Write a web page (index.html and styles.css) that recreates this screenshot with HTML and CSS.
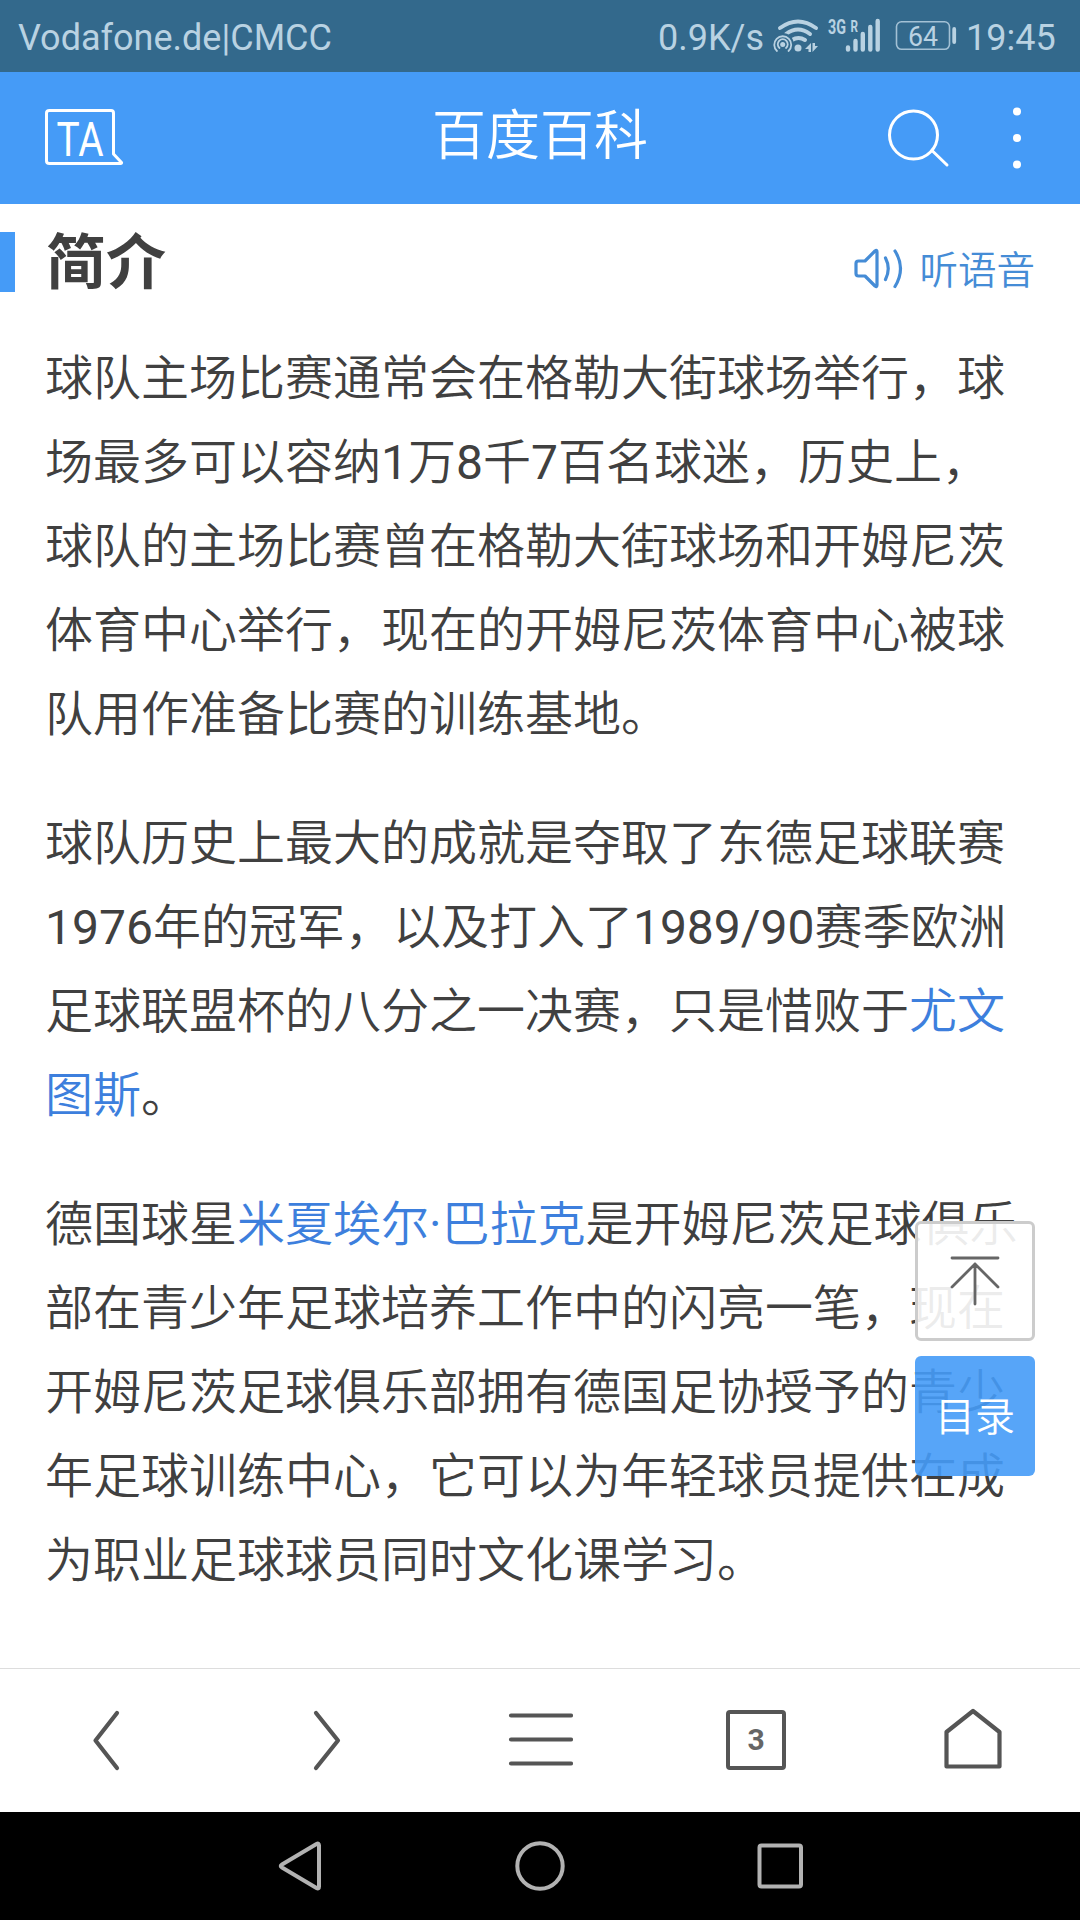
FILE: index.html
```html
<!DOCTYPE html>
<html lang="zh-CN">
<head>
    <meta charset="UTF-8">
    <meta name="viewport" content="width=device-width, initial-scale=1.0">
    <title>百度百科</title>
    <link rel="stylesheet" href="styles.css">
</head>
<body>
    <div class="status-bar">
        <span class="carrier">Vodafone.de|CMCC</span>
        <span class="speed">0.9K/s</span>
        <svg class="status-icons" width="190" height="72" viewBox="0 0 190 72">
            <!-- wifi -->
            <g fill="none" stroke="#b9d2e2" stroke-width="4" stroke-linecap="round">
                <path d="M10 28Q28 15 46 28"/>
                <path d="M16 34Q28 25 40 34"/>
                <path d="M22 40Q28.500 36 35 40"/>
            </g>
            <circle cx="28" cy="48" r="3.500" fill="#b9d2e2"/>
            <circle cx="12.700" cy="44" r="11" fill="#33698c"/>
            <g fill="none" stroke="#b9d2e2" stroke-width="1.800" stroke-linecap="round">
                <path d="M7 51A8.500 8.500 0 1 1 18.500 51"/>
                <path d="M9.500 48A5 5 0 1 1 16 48"/>
            </g>
            <circle cx="12.700" cy="44.500" r="2.500" fill="#b9d2e2"/>
            <path d="M35 49L41 43V52H38.500V49ZM42.500 43H45V46H48L42.500 52Z" fill="#b9d2e2"/>
            <!-- signal -->
            <text class="network" x="58" y="34" textLength="18" lengthAdjust="spacingAndGlyphs">3G</text>
            <text class="roaming" x="80.500" y="31.500" textLength="7.500" lengthAdjust="spacingAndGlyphs">R</text>
            <g stroke="#b9d2e2" stroke-width="4.400" stroke-linecap="round">
                <path d="M78 47.500V49.500M85.500 41V49.500M92.800 34V49.500M100.300 27V49.500M107.700 21V49.500"/>
            </g>
            <!-- battery -->
            <rect x="126.500" y="21.800" width="53" height="27.500" rx="5" fill="none" stroke="#a3c1d5" stroke-width="1.600"/>
            <rect x="182.300" y="27" width="3.800" height="17" rx="1.900" fill="#b9d2e2"/>
            <text class="battery" x="138" y="45.500" textLength="30" lengthAdjust="spacingAndGlyphs">64</text>
        </svg>
        <span class="clock">19:45</span>
    </div>

    <header class="header">
        <svg width="80" height="60" viewBox="0 0 80 60">
            <path d="M4.500 2.500H66Q68.500 2.500 68.500 5V46L76.500 54.500Q77 55.500 75.500 55.500H4.500Q1.500 55.500 1.500 53V5Q1.500 2.500 4.500 2.500Z" fill="none" stroke="#fff" stroke-width="3" stroke-linejoin="round"/>
            <text class="ta" x="11.500" y="47.500" textLength="47" lengthAdjust="spacingAndGlyphs">TA</text>
        </svg>
        <h1>百度百科</h1>
        <div class="header-actions">
            <svg width="62" height="60" viewBox="0 0 62 60">
                <g fill="none" stroke="#fff" stroke-width="3" stroke-linecap="round">
                    <circle cx="25.500" cy="27" r="24"/>
                    <path d="M44.500 43L59 57"/>
                </g>
            </svg>
            <svg width="8" height="62" viewBox="0 0 8 62">
                <g fill="#fff">
                    <circle cx="4" cy="4.500" r="4"/>
                    <circle cx="4" cy="31" r="4"/>
                    <circle cx="4" cy="57.500" r="4"/>
                </g>
            </svg>
        </div>
    </header>

    <main class="content">
        <div class="section-title">
            <h2>简介</h2>
            <a class="listen">
                <svg width="50" height="42" viewBox="0 0 50 42">
                    <g fill="none" stroke="#458cd6" stroke-width="3.200" stroke-linecap="round" stroke-linejoin="round">
                        <path d="M4.500 13H11L21 3Q23 1.500 23 4V37Q23 39.500 21 38L11 28H4.500Q2 28 2 25.500V15.500Q2 13 4.500 13Z"/>
                        <path d="M31.500 10Q37 20.500 31.500 31.500M41 3Q52 20.500 41 38.500"/>
                    </g>
                </svg>
                <span>听语音</span>
            </a>
        </div>
        <div class="article">
            <p>球队主场比赛通常会在格勒大街球场举行，球场最多可以容纳1万8千7百名球迷，历史上，球队的主场比赛曾在格勒大街球场和开姆尼茨体育中心举行，现在的开姆尼茨体育中心被球队用作准备比赛的训练基地。</p>
            <p>球队历史上最大的成就是夺取了东德足球联赛1976年的冠军，以及打入了1989/90赛季欧洲足球联盟杯的八分之一决赛，只是惜败于<a>尤文图斯</a>。</p>
            <p>德国球星<a>米夏埃尔·巴拉克</a>是开姆尼茨足球俱乐部在青少年足球培养工作中的闪亮一笔，现在开姆尼茨足球俱乐部拥有德国足协授予的青少年足球训练中心，它可以为年轻球员提供在成为职业足球球员同时文化课学习。</p>
        </div>
        <div class="float-buttons">
            <div class="to-top">
                <svg width="52" height="50" viewBox="0 0 52 50">
                    <path d="M3 2H49M26 8V48M3 31L26 8L49 31" fill="none" stroke="#666" stroke-width="2.800" stroke-linecap="round" stroke-linejoin="round"/>
                </svg>
            </div>
            <div class="catalog">目录</div>
        </div>
    </main>

    <footer class="toolbar">
        <svg width="60" height="66" viewBox="0 0 60 66">
            <path d="M40 5L18.500 32.500L40 60" fill="none" stroke="#555" stroke-width="4.200" stroke-linecap="round" stroke-linejoin="round"/>
        </svg>
        <svg width="60" height="66" viewBox="0 0 60 66">
            <path d="M24 5L46 32.500L24 60" fill="none" stroke="#555" stroke-width="4.200" stroke-linecap="round" stroke-linejoin="round"/>
        </svg>
        <svg width="66" height="66" viewBox="0 0 66 66">
            <path d="M4 7.500H64M4 31.500H64M4 55.500H64" fill="none" stroke="#555" stroke-width="4.200" stroke-linecap="round"/>
        </svg>
        <div class="tabs">3</div>
        <svg width="60" height="66" viewBox="0 0 60 66">
            <path d="M3.500 24L30 3L56.500 24V58.500H3.500Z" fill="none" stroke="#555" stroke-width="4.200" stroke-linejoin="round"/>
        </svg>
    </footer>

    <nav class="system-nav">
        <svg width="50" height="52" viewBox="0 0 50 52">
            <path d="M45 5.500V46.500Q45 49.500 42.500 48L8 27.500Q5.500 26 8 24.500L42.500 4Q45 2.500 45 5.500Z" fill="none" stroke="#b2b2b2" stroke-width="4" stroke-linejoin="round"/>
        </svg>
        <svg width="52" height="52" viewBox="0 0 52 52">
            <circle cx="26" cy="26" r="22.700" fill="none" stroke="#b2b2b2" stroke-width="4"/>
        </svg>
        <svg width="50" height="52" viewBox="0 0 50 52">
            <rect x="3.500" y="5.500" width="41.500" height="41" rx="2" fill="none" stroke="#b2b2b2" stroke-width="4"/>
        </svg>
    </nav>
</body>
</html>
```
FILE: styles.css
```css
* {
    box-sizing: border-box;
}
body {
    width: 1080px;
    height: 1920px;
    margin: 0;
    display: flex;
    flex-direction: column;
    overflow: hidden;
    background-color: #fff;
    color: #404040;
    font-family: Roboto, "Noto Sans CJK SC", sans-serif;
}
svg {
    display: block;
    flex: none;
}
h1, h2, p {
    margin: 0;
}
.status-bar {
    height: 72px;
    flex: none;
    display: flex;
    align-items: center;
    padding: 0 27px 0 18px;
    background-color: #33698c;
    color: #b9d2e2;
    font-size: 36px;
    line-height: 72px;
    white-space: nowrap;
}
.status-bar span {
    padding-top: 3px;
}
.speed {
    margin-left: auto;
    margin-right: 6px;
}
.clock {
    width: 87px;
    margin-left: 6px;
    text-align: right;
}
.network, .roaming, .battery {
    fill: #b9d2e2;
}
.network {
    font-size: 20px;
    font-weight: bold;
}
.roaming {
    font-size: 17px;
    font-weight: bold;
}
.battery {
    font-size: 27px;
}
.header {
    height: 132px;
    flex: none;
    display: grid;
    grid-template-columns: 1fr auto 1fr;
    align-items: center;
    padding: 0 59px 0 45px;
    background-color: #459bf7;
    color: #fff;
}
.header h1 {
    padding-bottom: 3px;
    padding-left: 14px;
    font-size: 54px;
    font-weight: 350;
    line-height: 80px;
}
.header-actions {
    display: flex;
    align-items: center;
    justify-content: flex-end;
    gap: 63px;
}
.ta {
    fill: #fff;
    font-size: 48px;
}
.content {
    flex: 1;
    position: relative;
    padding-top: 28px;
}
.section-title {
    height: 60px;
    display: flex;
    align-items: center;
    justify-content: space-between;
    padding-right: 45px;
    border-left: 15px solid #459bf7;
}
.section-title h2 {
    padding-top: 4px;
    padding-left: 31px;
    font-size: 60px;
    font-weight: bold;
    line-height: 60px;
}
.listen {
    display: flex;
    align-items: center;
    gap: 15px;
    padding-top: 13px;
    color: #458cd6;
    font-size: 38.5px;
    font-weight: 350;
    line-height: 48px;
}
.listen span {
    padding-top: 4px;
}
.article {
    padding: 45px 45px 0;
    font-family: Roboto, "Noto Sans CJK SC DemiLight", "Noto Sans CJK SC", sans-serif;
    font-size: 48px;
    line-height: 84px;
}
.article p {
    margin-bottom: 45px;
}
.article a {
    color: #3d7fdd;
}
.float-buttons {
    position: absolute;
    top: 1017px;
    right: 45px;
    display: flex;
    flex-direction: column;
    gap: 15px;
}
.to-top, .catalog {
    width: 120px;
    height: 120px;
    display: flex;
    align-items: center;
    justify-content: center;
    border-radius: 6px;
}
.to-top {
    border: 3px solid #ccc;
    background-color: rgba(255, 255, 255, 0.9);
}
.catalog {
    padding-bottom: 4px;
    background-color: rgba(69, 155, 247, 0.9);
    color: #fff;
    font-size: 40px;
    font-weight: 350;
}
.toolbar {
    height: 144px;
    flex: none;
    display: flex;
    align-items: center;
    justify-content: space-between;
    padding: 0 77px;
    border-top: 1px solid #ddd;
}
.tabs {
    width: 60px;
    height: 60px;
    display: flex;
    align-items: center;
    justify-content: center;
    margin: 0 2px 2px -2px;
    border: 4px solid #555;
    border-radius: 4px;
    color: #666;
    font-size: 30px;
    font-weight: bold;
}
.system-nav {
    height: 108px;
    flex: none;
    display: flex;
    align-items: center;
    justify-content: center;
    gap: 190px;
    background-color: #000;
}
```
